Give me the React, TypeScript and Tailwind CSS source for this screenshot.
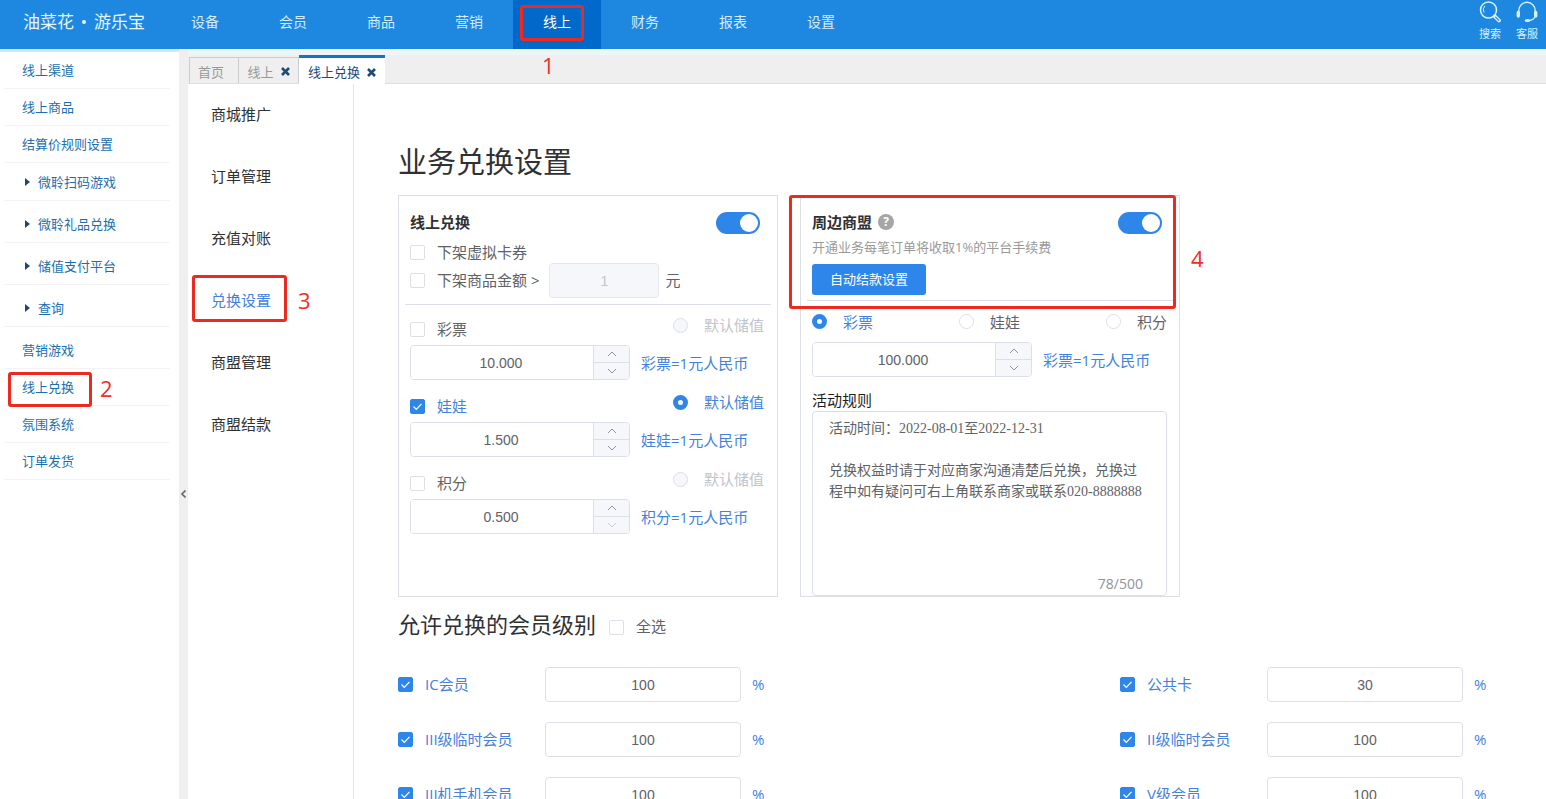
import React, { useId, useState } from 'react';
import clsx from 'clsx';

const navItems = ['设备', '会员', '商品', '营销', '线上', '财务', '报表', '设置'];

interface SideItem {
  name: string;
  arrow?: boolean;
  tall?: boolean;
}

const sideItems: SideItem[] = [
  { name: '线上渠道' },
  { name: '线上商品' },
  { name: '结算价规则设置' },
  { name: '微聆扫码游戏', arrow: true },
  { name: '微聆礼品兑换', arrow: true, tall: true },
  { name: '储值支付平台', arrow: true, tall: true },
  { name: '查询', arrow: true, tall: true },
  { name: '营销游戏', tall: true },
  { name: '线上兑换' },
  { name: '氛围系统' },
  { name: '订单发货' },
];

const subMenu = ['商城推广', '订单管理', '充值对账', '兑换设置', '商盟管理', '商盟结款'];

const exchangeItems = [
  { name: '彩票', value: 10, checked: false },
  { name: '娃娃', value: 1.5, checked: true },
  { name: '积分', value: 0.5, checked: false, min: 0.5 },
];

const memberLevels = [
  { name: 'IC会员', rate: 100 },
  { name: '公共卡', rate: 30 },
  { name: 'III级临时会员', rate: 100 },
  { name: 'II级临时会员', rate: 100 },
  { name: 'III机手机会员', rate: 100 },
  { name: 'V级会员', rate: 100 },
];

const rulesText = `活动时间：2022-08-01至2022-12-31

兑换权益时请于对应商家沟通清楚后兑换，兑换过程中如有疑问可右上角联系商家或联系020-8888888`;

// 红色步骤框和编号
function StepBox({ className }: { className: string }) {
  return (
    <span
      className={clsx('pointer-events-none absolute z-10 rounded-[3px] border-[3px] border-[#ec2a22]', className)}
    />
  );
}

function StepNumber({ n, className }: { n: number; className: string }) {
  return (
    <span className={clsx('pointer-events-none absolute z-10 text-[22px] leading-6 text-[#ee2e28]', className)}>
      {n}
    </span>
  );
}

interface CheckProps {
  label: string;
  defaultChecked?: boolean;
}

function Check({ label, defaultChecked }: CheckProps) {
  return (
    <label className="group flex cursor-pointer items-center gap-3 text-[15px] leading-5 text-[#606266]">
      <span className="relative block size-[15px] shrink-0">
        <input
          type="checkbox"
          defaultChecked={defaultChecked}
          className="peer block size-[15px] appearance-none rounded-xs border border-[#dcdfe6] bg-white
                     checked:border-[#2f86ea] checked:bg-[#2f86ea]"
        />
        <svg
          viewBox="0 0 15 15"
          className="pointer-events-none absolute inset-0 hidden size-[15px] peer-checked:block"
          fill="none"
          stroke="#fff"
          strokeWidth="1.2"
        >
          <path d="M3.5 7.5 6.3 10.3 11.5 4.8" />
        </svg>
      </span>
      <span className="pb-[2px] whitespace-nowrap group-has-checked:text-[#4382dc]">{label}</span>
    </label>
  );
}

interface RadioProps {
  name: string;
  label: string;
  defaultChecked?: boolean;
  disabled?: boolean;
}

function Radio({ name, label, defaultChecked, disabled }: RadioProps) {
  return (
    <label
      className={clsx(
        'group flex items-center gap-4 text-[15px] leading-5',
        disabled ? 'text-[#c0c4cc]' : 'cursor-pointer text-[#606266]',
      )}
    >
      <input
        type="radio"
        name={name}
        defaultChecked={defaultChecked}
        disabled={disabled}
        className="block size-[15px] shrink-0 appearance-none rounded-full border border-[#dcdfe6] bg-white
                   checked:border-[5px] checked:border-[#2f86ea] disabled:bg-[#f5f7fa]"
      />
      <span className="whitespace-nowrap group-has-checked:text-[#4382dc]">{label}</span>
    </label>
  );
}

function Switch({ label }: { label: string }) {
  return (
    <label className="relative block h-[22px] w-11 cursor-pointer">
      <input
        type="checkbox"
        role="switch"
        aria-label={label}
        defaultChecked
        className="peer block h-[22px] w-11 appearance-none rounded-full bg-[#dcdfe6] checked:bg-[#2f86ea]"
      />
      <span
        className="pointer-events-none absolute top-[2px] left-[2px] size-[18px] rounded-full bg-white
                   transition-all peer-checked:left-6"
      />
    </label>
  );
}

interface NumberFieldProps {
  label: string;
  initial: number;
  min?: number;
}

function NumberField({ label, initial, min = 0 }: NumberFieldProps) {
  const [value, setValue] = useState(initial.toFixed(3));
  const atMin = Number(value) <= min;

  const step = (delta: number) => {
    setValue((v) => Math.max(min, (Number(v) || 0) + delta).toFixed(3));
  };

  return (
    <div className="flex items-center gap-[11px]">
      <div className="flex h-[35px] w-[220px] overflow-hidden rounded-sm border border-[#dcdfe6]">
        <input
          type="text"
          aria-label={label}
          value={value}
          onChange={(e) => setValue(e.target.value)}
          className="min-w-0 flex-1 bg-white pr-[2px] text-center font-[Liberation_Sans,sans-serif] text-sm
                     text-[#606266] outline-none"
        />
        <div className="flex w-9 flex-col border-l border-[#dcdfe6] bg-[#f5f7fa] text-[#909399]">
          <button
            type="button"
            aria-label="增加"
            onClick={() => step(1)}
            className="flex flex-1 items-center justify-center border-b border-[#dcdfe6]"
          >
            <Caret up />
          </button>
          <button
            type="button"
            aria-label="减少"
            disabled={atMin}
            onClick={() => step(-1)}
            className="flex flex-1 items-center justify-center disabled:text-[#c8ccd3]"
          >
            <Caret />
          </button>
        </div>
      </div>
      <span className="text-[15px] leading-5 whitespace-nowrap text-[#4382dc]">{label}=1元人民币</span>
    </div>
  );
}

function Caret({ up }: { up?: boolean }) {
  return (
    <svg viewBox="0 0 10 6" className="h-[6px] w-[10px]" fill="none" stroke="currentColor" strokeWidth="1">
      <path d={up ? 'M1 5 5 1 9 5' : 'M1 1 5 5 9 1'} />
    </svg>
  );
}

function CloseMark() {
  return (
    <svg viewBox="0 0 9 9" className="mb-[2px] size-[9px]" fill="none" stroke="#1d4a78" strokeWidth="2.6">
      <path d="M1 1 8 8M8 1 1 8" />
    </svg>
  );
}

function Header() {
  return (
    <header className="flex h-[49px] shrink-0 items-stretch bg-[#1e88e1]">
      <div className="flex w-[161px] shrink-0 items-center gap-2 pb-[6px] pl-[23px] text-[17px] text-[#e6f5ff]">
        <span>油菜花</span>
        <span className="size-1 rounded-full bg-[#e6f5ff]" />
        <span>游乐宝</span>
      </div>
      <nav className="flex flex-1">
        {navItems.map((item) => (
          <a
            key={item}
            href="#"
            className={clsx(
              'relative flex w-[88px] items-center justify-center pb-[6px] text-sm',
              item === '线上' ? 'bg-[#0069c9] text-white' : 'text-[#d3ecff]',
            )}
          >
            {item}
            {item === '线上' && (
              <>
                <StepBox className="top-[5px] left-[7px] h-[36px] w-[64px]" />
                <StepNumber n={1} className="top-[53px] left-[29px]" />
              </>
            )}
          </a>
        ))}
      </nav>
      <div className="flex gap-[15px] pt-px pr-2 text-[11px] leading-4 text-[#d9f1ff]">
        <button type="button" className="flex w-[22px] flex-col items-center gap-[3px] whitespace-nowrap">
          <svg viewBox="0 0 22 22" className="size-[22px]" fill="none" stroke="currentColor">
            <circle cx="9.5" cy="9" r="8" strokeWidth="1.5" />
            <path d="M5 11.5A5.5 5.5 0 0 1 6 4.8" strokeWidth="1" />
            <path d="M15.8 15.3 20 19.5" strokeWidth="3.8" strokeLinecap="round" />
            <path d="M16.6 16.1 19.8 19.3" stroke="#1e88e1" strokeWidth="1.2" strokeLinecap="round" />
          </svg>
          搜索
        </button>
        <button type="button" className="flex w-[22px] flex-col items-center gap-[3px] whitespace-nowrap">
          <svg viewBox="0 0 22 22" className="size-[22px]" fill="none" stroke="currentColor">
            <path d="M2.8 11V9.5a8.2 8.2 0 0 1 16.400 0V11" strokeWidth="1.4" />
            <path d="M2.3 11.5v3.5M19.700 11.5v3.5" strokeWidth="3.4" strokeLinecap="round" />
            <path d="M18.8 16c-1 2.2-3 3.3-6 3.5" strokeWidth="1.2" />
            <ellipse cx="11.5" cy="19.5" rx="2.8" ry="1.5" fill="currentColor" stroke="none" />
          </svg>
          客服
        </button>
      </div>
    </header>
  );
}

function Sidebar() {
  return (
    <aside className="w-[179px] shrink-0 border-t-[3px] border-[#cde9fc] bg-white">
      <ul className="pr-[9px] pl-1 text-[13px] leading-5">
        {sideItems.map((item) => (
          <li
            key={item.name}
            className={clsx(
              'relative border-b border-[#f3f3f3]',
              item.tall && 'h-[42px] pt-1',
              !item.tall && (item.arrow ? 'h-[38px]' : 'h-[37px]'),
            )}
          >
            <a
              href="#"
              className={clsx(
                'flex h-full items-center gap-2 text-[#1b6fae]',
                item.arrow ? 'pl-[21px]' : 'pl-[18px]',
              )}
            >
              {item.arrow && (
                <svg viewBox="0 0 5 8" className="h-2 w-[5px]" fill="#24486b">
                  <path d="M0 0 5 4 0 8z" />
                </svg>
              )}
              {item.name}
            </a>
            {item.name === '线上兑换' && (
              <>
                <StepBox className="top-[3px] left-[4px] h-[35px] w-[84px]" />
                <StepNumber n={2} className="top-[7px] left-[96px]" />
              </>
            )}
          </li>
        ))}
      </ul>
    </aside>
  );
}

function Tabs() {
  return (
    <div
      className="flex h-[35px] shrink-0 items-end border-t-[6px] border-b border-[#dddddd] border-t-[#eff4f6]
                 bg-[#efefef] pl-px text-[13px]"
    >
      <button
        type="button"
        className="h-[26px] w-[49px] border-t border-l border-[#cccccc] pt-1 pr-[6px] text-[#999999]"
      >
        首页
      </button>
      <button
        type="button"
        className="flex h-[26px] w-[61px] items-center justify-center gap-[7px] border-t border-x
                   border-[#cccccc] pt-1 text-[#999999]"
      >
        线上
        <CloseMark />
      </button>
      <button
        type="button"
        className="-mb-px flex h-[29px] w-[86px] items-center justify-center gap-[7px] border-t-[3px]
                   border-[#0d78bb] bg-white pt-1 text-[#1d4a78]"
      >
        线上兑换
        <CloseMark />
      </button>
    </div>
  );
}

function OnlineCard() {
  return (
    <section className="w-[380px] shrink-0 border border-[#dcdfe6] px-[6px] pt-4">
      <div className="px-[5px]">
        <div className="flex items-center justify-between pr-[6px]">
          <h2 className="pb-[2px] text-[15px] leading-5 font-bold text-[#303133]">线上兑换</h2>
          <Switch label="线上兑换" />
        </div>
        <div className="mt-2 flex h-[21px] items-center">
          <Check label="下架虚拟卡券" />
        </div>
        <div className="flex items-center gap-[6px]">
          <div className="pr-1">
            <Check label="下架商品金额 >" />
          </div>
          <input
            type="text"
            aria-label="下架商品金额"
            defaultValue="1"
            disabled
            className="h-[35px] w-[110px] rounded-sm border border-[#e4e7ed] bg-[#f5f7fa] text-center
                       font-[Liberation_Sans,sans-serif] text-sm text-[#c0c4cc]"
          />
          <span className="pb-[2px] text-[15px] leading-5 text-[#606266]">元</span>
        </div>
      </div>
      <hr className="mt-[6px] border-[#dcdfe6]" />
      {exchangeItems.map((item) => (
        <div key={item.name} className="mb-[2px] px-[5px]">
          <div className="flex h-10 items-center justify-between pr-[2px]">
            <div className="pt-[9px]">
              <Check label={item.name} defaultChecked={item.checked} />
            </div>
            <Radio
              name="defaultStore"
              label="默认储值"
              defaultChecked={item.checked}
              disabled={!item.checked}
            />
          </div>
          <NumberField label={item.name} initial={item.value} min={item.min} />
        </div>
      ))}
    </section>
  );
}

function AllianceCard() {
  const rulesId = useId();
  const [rules, setRules] = useState(rulesText);

  return (
    <section className="relative w-[380px] shrink-0 border border-[#dcdfe6] px-[6px] pt-4">
      <StepBox className="-top-px -left-[12px] h-[114px] w-[387px]" />
      <StepNumber n={4} className="top-[50px] left-[390px]" />
      <div className="px-[5px]">
        <div className="flex items-center justify-between pr-[6px]">
          <div className="flex items-center gap-[6px] pb-[2px]">
            <h2 className="text-[15px] leading-5 font-bold text-[#303133]">周边商盟</h2>
            <button
              type="button"
              aria-label="帮助"
              className="flex size-4 items-center justify-center rounded-full bg-[#a6a6a6] text-xs leading-4
                         font-bold text-white"
            >
              ?
            </button>
          </div>
          <Switch label="周边商盟" />
        </div>
        <p className="h-[26px] text-[13px] leading-[26px] text-[#999999]">
          开通业务每笔订单将收取1%的平台手续费
        </p>
        <button
          type="button"
          className="mt-1 block h-[31px] w-[114px] rounded-[3px] bg-[#2f86ea] text-[13px] text-white"
        >
          自动结款设置
        </button>
      </div>
      <hr className="mt-[5px] border-[#dcdfe6]" />
      <div className="px-[5px]">
        <div className="flex h-[41px] items-center justify-between pr-[1px]">
          <Radio name="alliance" label="彩票" defaultChecked />
          <Radio name="alliance" label="娃娃" />
          <Radio name="alliance" label="积分" />
        </div>
        <NumberField label="彩票" initial={100} />
        <label htmlFor={rulesId} className="block h-[34px] pt-[13px] text-[15px] leading-5 text-[#1f1f1f]">
          活动规则
        </label>
        <div className="relative w-[355px]">
          <textarea
            id={rulesId}
            value={rules}
            maxLength={500}
            onChange={(e) => setRules(e.target.value)}
            className="block h-[185px] w-full resize-none overflow-hidden rounded-sm border border-[#dcdfe6]
                       bg-white py-[6px] pr-[20px] pl-4
                       font-[Liberation_Serif,Noto_Sans_CJK_SC,serif] text-sm leading-[21px]
                       text-[#606266] outline-none"
          />
          <span className="absolute right-6 bottom-[2px] text-sm leading-5 text-[#909399]">78/500</span>
        </div>
      </div>
    </section>
  );
}

function MemberLevels() {
  return (
    <section>
      <div className="mt-3 flex h-8 items-center gap-[13px]">
        <h2 className="pb-[2px] text-[22px] leading-8 text-[#303133]">允许兑换的会员级别</h2>
        <div className="pt-1">
          <Check label="全选" />
        </div>
      </div>
      <div className="mt-[26px] grid grid-cols-[722fr_426fr] gap-y-5">
        {memberLevels.map((level) => (
          <div key={level.name} className="flex items-center">
            <div className="w-[147px] shrink-0">
              <Check label={level.name} defaultChecked />
            </div>
            <input
              type="text"
              aria-label={`${level.name}兑换比例`}
              defaultValue={level.rate}
              className="h-[35px] w-[196px] rounded-sm border border-[#dcdfe6] bg-white text-center
                         font-[Liberation_Sans,sans-serif] text-sm text-[#606266] outline-none"
            />
            <span className="pl-[11px] text-[15px] text-[#4382dc]">%</span>
          </div>
        ))}
      </div>
    </section>
  );
}

export default function App() {
  return (
    <div className="flex h-screen flex-col overflow-hidden bg-white font-[Open_Sans,Noto_Sans_CJK_SC,sans-serif]">
      <Header />
      <div className="flex min-h-0 flex-1">
        <Sidebar />
        <div className="flex w-[9px] shrink-0 items-center justify-center bg-[#efefef] pt-[140px]">
          <button type="button" aria-label="收起菜单">
            <svg viewBox="0 0 5 8" className="h-2 w-[5px]" fill="none" stroke="#6b6b6b" strokeWidth="1.6">
              <path d="M4.5 0.5 1 4 4.5 7.5" />
            </svg>
          </button>
        </div>
        <div className="flex min-w-0 flex-1 flex-col">
          <Tabs />
          <div className="flex min-h-0 flex-1">
            <ul className="w-[166px] shrink-0 border-r border-[#e6e6e6] text-[15px] text-[#303133]">
              {subMenu.map((item) => (
                <li key={item} className="relative h-[62px]">
                  <a
                    href="#"
                    className={clsx(
                      'flex h-full items-center pb-[2px] pl-[23px]',
                      item === '兑换设置' && 'text-[#4382dc]',
                    )}
                  >
                    {item}
                  </a>
                  {item === '兑换设置' && (
                    <>
                      <StepBox className="top-[5px] left-[4px] h-[47px] w-[95px]" />
                      <StepNumber n={3} className="top-[18px] left-[110px]" />
                    </>
                  )}
                </li>
              ))}
            </ul>
            <main className="min-w-0 flex-1 overflow-auto pt-[56px] pl-11 [scrollbar-width:none]">
              <h1 className="h-[55px] text-[29px] leading-[44px] text-[#303133]">业务兑换设置</h1>
              <div className="flex gap-[22px]">
                <OnlineCard />
                <AllianceCard />
              </div>
              <MemberLevels />
            </main>
          </div>
        </div>
      </div>
    </div>
  );
}
